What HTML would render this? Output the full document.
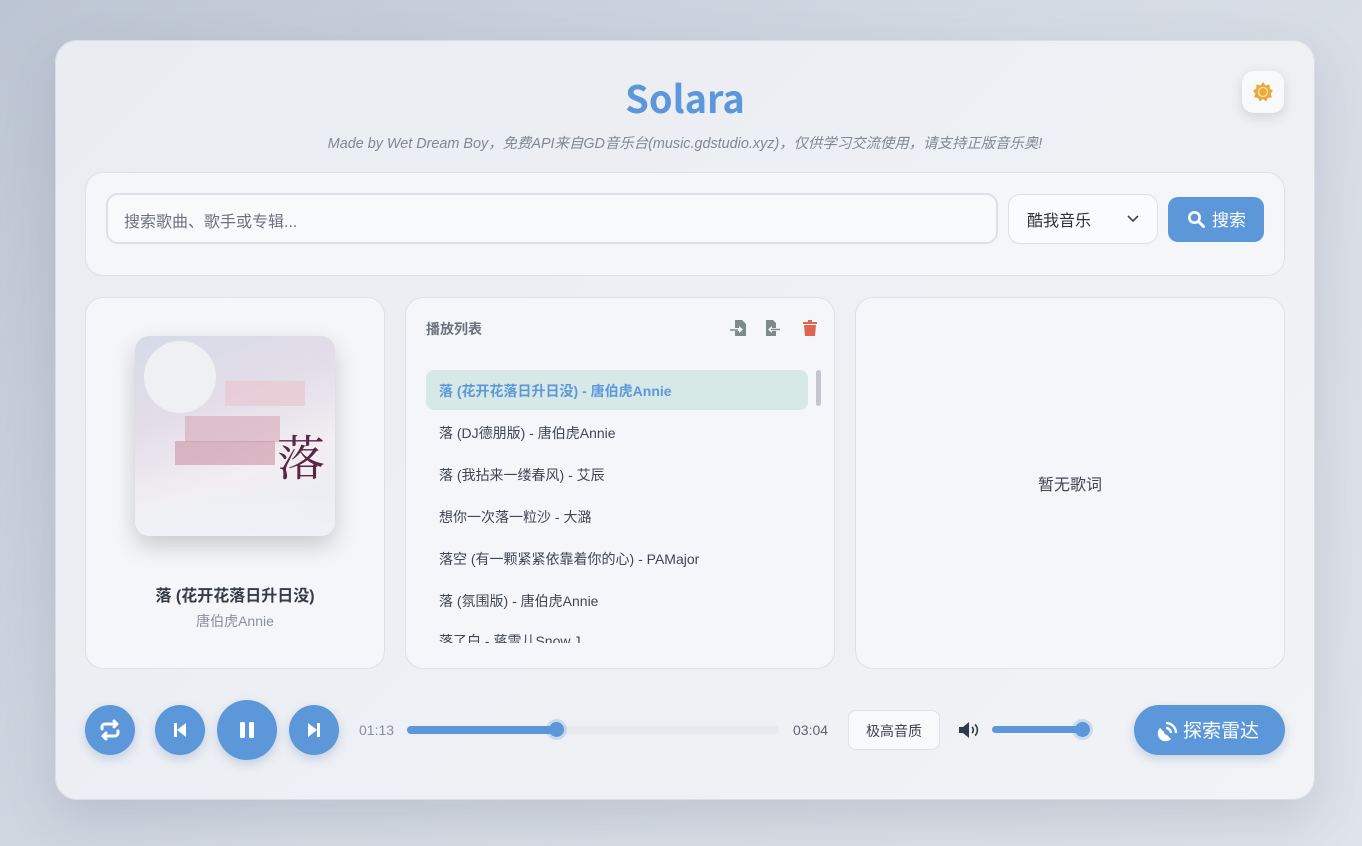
<!DOCTYPE html>
<html><head><meta charset="utf-8"><style>
*{box-sizing:border-box;margin:0;padding:0}
body{width:1362px;height:846px;overflow:hidden;background:linear-gradient(135deg,#bcc5d3 0%,#d5dbe4 50%,#dfe3ea 100%);font-family:"Liberation Sans","Noto Sans CJK SC",sans-serif;color:#3a4250;position:relative}
.main{position:absolute;left:55px;top:40px;width:1260px;height:760px;border-radius:22px;background:linear-gradient(135deg,#e9ecf1,#f1f3f6);box-shadow:inset 0 0 0 1px #d8dde5,0 20px 50px rgba(80,90,110,.18)}
.title{position:absolute;left:0;right:0;top:34px;text-align:center;font-size:38px;font-weight:bold;color:#5b97d9;font-family:"Noto Sans CJK SC","Liberation Sans",sans-serif;line-height:46px}
.sub{position:absolute;left:0;right:0;top:92px;text-align:center;font-size:14.4px;font-style:italic;color:#7f8894}
.theme{position:absolute;left:1187px;top:31px;width:42px;height:42px;border-radius:12px;background:#f8f9fb;box-shadow:0 4px 12px rgba(0,0,0,.12)}
.panel{position:absolute;background:rgba(246,247,250,.85);border:1px solid #dde1e7;border-radius:18px}
.input{position:absolute;left:51px;top:153px;width:892px;height:51px;border:2px solid #dde1e7;border-radius:12px;background:#f8f9fb;font-size:16px;color:#6c737d;padding:13px 16px}
.sel{position:absolute;left:953px;top:154px;width:150px;height:50px;border:1px solid #dde1e7;border-radius:12px;background:#fafbfc;font-size:16px;padding:12px 18px;color:#333}
.btn{position:absolute;left:1113px;top:157px;width:96px;height:45px;border-radius:10px;background:#5b97d9;color:#fff;font-size:17px;padding:9px 0 0 44px}
.cb{position:absolute;border-radius:50%;background:#5b97d9;box-shadow:0 4px 10px rgba(70,110,170,.25)}
.pl{position:absolute;left:20px;font-size:14px;color:#3f4652}
</style></head><body>
<div class="main">
<div class="title">Solara</div>
<div class="sub">Made by Wet Dream Boy，免费API来自GD音乐台(music.gdstudio.xyz)，仅供学习交流使用，请支持正版音乐奥!</div>
<div class="theme"><svg width="42" height="42" viewBox="0 0 42 42"><polygon points="21,11 23.5,14.5 27.6,13.4 27.6,17.5 31,19.6 28.6,22.6 30,26.5 26,26.8 24.2,30.5 21,28 17.8,30.5 16,26.8 12,26.5 13.4,22.6 11,19.6 14.4,17.5 14.4,13.4 18.5,14.5" fill="#eda83a"/><circle cx="21" cy="21" r="4.5" fill="none" stroke="#fbe2b4" stroke-width="1.3"/></svg></div>
<div class="panel" style="left:30px;top:132px;width:1200px;height:104px"></div>
<div class="input">搜索歌曲、歌手或专辑...</div>
<div class="sel">酷我音乐<svg style="position:absolute;right:18px;top:20px" width="12" height="8" viewBox="0 0 12 8"><path d="M1 1l5 5 5-5" fill="none" stroke="#444" stroke-width="1.6"/></svg></div>
<div class="btn"><svg style="position:absolute;left:19px;top:13px" width="18" height="18" viewBox="0 0 18 18"><circle cx="7.5" cy="7.5" r="5.2" fill="none" stroke="#fff" stroke-width="2.6"/><path d="M11.5 11.5l5 5" stroke="#fff" stroke-width="3" stroke-linecap="round"/></svg>搜索</div>

<div class="panel" style="left:30px;top:257px;width:300px;height:372px">
<div style="position:absolute;left:49px;top:38px;width:200px;height:200px;border-radius:14px;overflow:hidden;box-shadow:0 10px 24px rgba(0,0,0,.18);background:linear-gradient(160deg,#d5dbe8 0%,#e3dde8 35%,#f2eef2 65%,#e6edf4 100%)">
<div style="position:absolute;left:9px;top:5px;width:72px;height:72px;border-radius:50%;background:#eff0f4"></div>
<div style="position:absolute;left:90px;top:45px;width:80px;height:25px;background:#e7c9d2;opacity:.8"></div>
<div style="position:absolute;left:50px;top:80px;width:95px;height:26px;background:#d7a9b8;opacity:.6"></div>
<div style="position:absolute;left:40px;top:105px;width:100px;height:24px;background:#c98b9e;opacity:.55"></div>
<div style="position:absolute;left:0;top:140px;width:200px;height:60px;background:linear-gradient(180deg,rgba(240,242,246,0),#eef1f5)"></div>
<div style="position:absolute;left:142px;top:84px;font-size:48px;color:#5a2546;font-family:'Noto Serif CJK SC',serif">落</div>
</div>
<div style="position:absolute;left:0;right:0;top:284px;text-align:center;font-size:16px;font-weight:bold;color:#363c47">落 (花开花落日升日没)</div>
<div style="position:absolute;left:0;right:0;top:313px;text-align:center;font-size:14px;color:#8a9099">唐伯虎Annie</div>
</div>

<div class="panel" style="left:350px;top:257px;width:430px;height:372px;overflow:hidden">
<div style="position:absolute;left:20px;top:21px;font-size:14px;font-weight:bold;color:#6b727c">播放列表</div>
<svg style="position:absolute;left:324px;top:21px" width="94" height="18" viewBox="0 0 94 18"><path d="M5 1h7l4 4v12H5v-5h4v2l4-3.5L9 7v2H5z" fill="#7c8a88"/><path d="M0 11h8" stroke="#7c8a88" stroke-width="1.6"/><path d="M36 1h7l3 3v5h-4v-2l-4 3.5 4 3.5v-2h4v5H36z" fill="#7c8a88"/><path d="M41 10.5h9" stroke="#7c8a88" stroke-width="1.6"/><path d="M73 3h14v2H73zM78 1h4v2h-4zM74 6h12l-1 11H75z" fill="#e06452"/></svg>
<div style="position:absolute;left:20px;top:72px;width:382px;height:40px;border-radius:8px;background:#d6e9e6"></div>
<div style="position:absolute;left:410px;top:72px;width:5px;height:36px;border-radius:3px;background:#c3c7cd"></div>
<div class="pl" style="left:33px;top:83px;color:#5b97d9;font-weight:bold">落 (花开花落日升日没) - 唐伯虎Annie</div>
<div class="pl" style="left:33px;top:125px">落 (DJ德朋版) - 唐伯虎Annie</div>
<div class="pl" style="left:33px;top:167px">落 (我拈来一缕春风) - 艾辰</div>
<div class="pl" style="left:33px;top:209px">想你一次落一粒沙 - 大潞</div>
<div class="pl" style="left:33px;top:251px">落空 (有一颗紧紧依靠着你的心) - PAMajor</div>
<div class="pl" style="left:33px;top:293px">落 (氛围版) - 唐伯虎Annie</div>
<div class="pl" style="left:33px;top:333px;clip-path:inset(0 0 8px 0)">落了白 - 蒋雪儿Snow.J</div>
</div>

<div class="panel" style="left:800px;top:257px;width:430px;height:372px"><div style="position:absolute;left:0;right:0;top:173px;text-align:center;font-size:16px;color:#3f4652">暂无歌词</div></div>

<div class="cb" style="left:30px;top:665px;width:50px;height:50px"><svg width="50" height="50" viewBox="0 0 50 50"><path d="M17 24v-2a3 3 0 0 1 3-3h11M29 16l3 3-3 3M33 26v2a3 3 0 0 1-3 3H19M21 34l-3-3 3-3" fill="none" stroke="#fff" stroke-width="3" stroke-linecap="round" stroke-linejoin="round"/></svg></div>
<div class="cb" style="left:100px;top:665px;width:50px;height:50px"><svg width="50" height="50" viewBox="0 0 50 50"><rect x="19" y="18" width="3" height="14" fill="#fff"/><path d="M31 18v14l-9-7z" fill="#fff"/></svg></div>
<div class="cb" style="left:162px;top:660px;width:60px;height:60px"><svg width="60" height="60" viewBox="0 0 60 60"><rect x="23" y="22" width="5" height="16" rx="1.5" fill="#fff"/><rect x="32" y="22" width="5" height="16" rx="1.5" fill="#fff"/></svg></div>
<div class="cb" style="left:234px;top:665px;width:50px;height:50px"><svg width="50" height="50" viewBox="0 0 50 50"><path d="M19 18v14l9-7z" fill="#fff"/><rect x="28" y="18" width="3" height="14" fill="#fff"/></svg></div>
<div style="position:absolute;left:304px;top:682px;font-size:14px;color:#8a9099">01:13</div>
<div style="position:absolute;left:352px;top:686px;width:372px;height:8px;border-radius:4px;background:#e6e9ee"></div>
<div style="position:absolute;left:352px;top:686px;width:150px;height:8px;border-radius:4px;background:#5b97d9"></div>
<div style="position:absolute;left:494px;top:682px;width:15px;height:15px;border-radius:50%;background:#5b97d9;box-shadow:0 0 0 3px rgba(91,151,217,.25)"></div>
<div style="position:absolute;left:738px;top:682px;font-size:14px;color:#5d6470">03:04</div>
<div style="position:absolute;left:793px;top:670px;width:92px;height:40px;border:1px solid #dde1e7;border-radius:8px;background:#f8f9fb;font-size:14px;padding:10px 0;text-align:center;color:#3f4652">极高音质</div>
<svg style="position:absolute;left:903px;top:681px" width="22" height="18" viewBox="0 0 22 18"><path d="M1 6h4l6-5v16l-6-5H1z" fill="#2f3b4c"/><path d="M14 6a4 4 0 0 1 0 6M17 3.5a7.5 7.5 0 0 1 0 11" fill="none" stroke="#2f3b4c" stroke-width="1.6"/></svg>
<div style="position:absolute;left:937px;top:686px;width:92px;height:7px;border-radius:4px;background:#5b97d9"></div>
<div style="position:absolute;left:1020px;top:682px;width:15px;height:15px;border-radius:50%;background:#5b97d9;box-shadow:0 0 0 3px rgba(91,151,217,.25)"></div>
<div style="position:absolute;left:1079px;top:665px;width:151px;height:50px;border-radius:25px;background:#5b97d9;color:#fff;font-size:19px;padding:11px 0 0 49px;box-shadow:0 4px 10px rgba(70,110,170,.25)"><svg style="position:absolute;left:23px;top:15px" width="22" height="22" viewBox="0 0 22 22"><path d="M3 8l11 11a7 7 0 0 1-11-11z" fill="#fff"/><path d="M9 8a5 5 0 0 1 5 5M9 3a10 10 0 0 1 10 10" fill="none" stroke="#fff" stroke-width="2.4"/><circle cx="9" cy="13" r="1.6" fill="#5b97d9"/></svg>探索雷达</div>
</div>
</body></html>
